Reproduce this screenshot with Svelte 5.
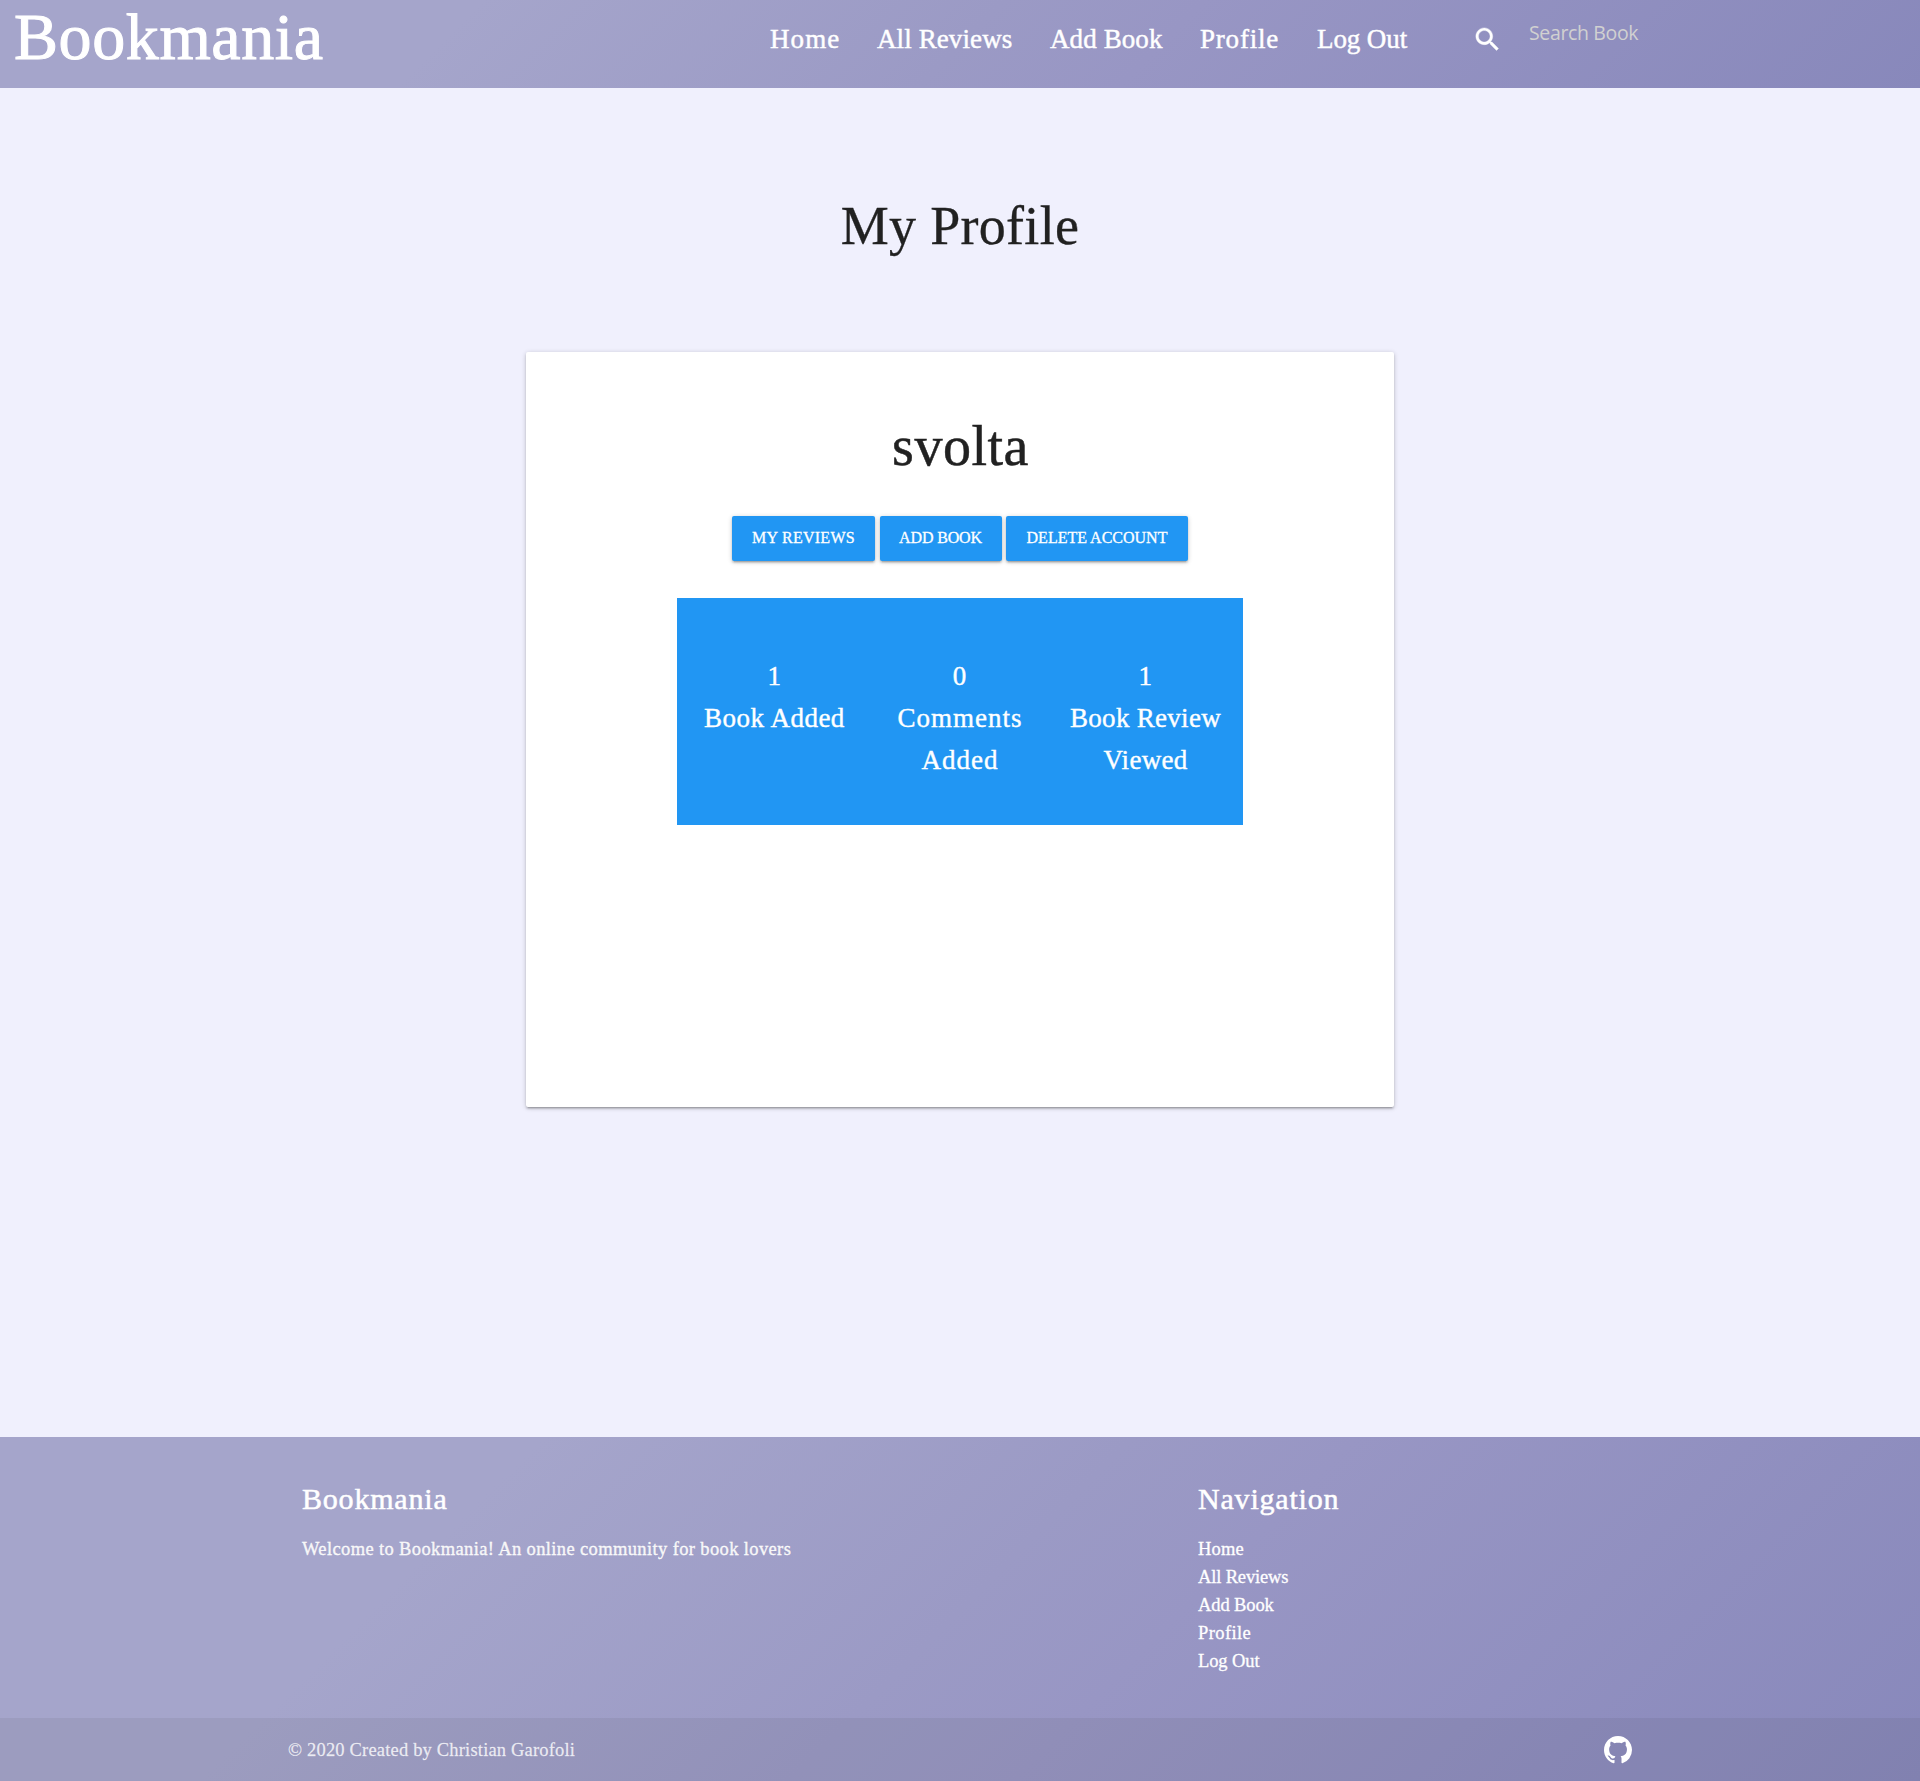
<script>
  const links = ['Home', 'All Reviews', 'Add Book', 'Profile', 'Log Out'];
  const actions = ['My Reviews', 'Add Book', 'Delete Account'];
  const stats = [
    { count: 1, label: 'Book Added' },
    { count: 0, label: 'Comments Added' },
    { count: 1, label: 'Book Review Viewed' },
  ];
</script>

<div class="page">
  <header>
    <a class="logo" href="#home">Bookmania</a>
    <nav>
      {#each links as link}
        <a href="#top">{link}</a>
      {/each}
    </nav>
    <form>
      <svg class="search" viewBox="0 0 24 24" aria-hidden="true">
        <path d="M15.5 14h-.79l-.28-.27C15.41 12.59 16 11.11 16 9.5 16 5.91 13.09 3 9.5 3S3 5.91 3 9.5 5.91 16 9.5 16c1.61 0 3.09-.59 4.23-1.57l.27.28v.79l5 4.99L20.49 19l-4.99-5zm-6 0C7.01 14 5 11.99 5 9.5S7.01 5 9.5 5 14 7.01 14 9.5 11.99 14 9.5 14z" />
      </svg>
      <span class="placeholder">Search Book</span>
    </form>
  </header>

  <main>
    <h1>My Profile</h1>
    <section class="card">
      <h2>svolta</h2>
      <div class="actions">
        {#each actions as action}
          <button type="button">{action}</button>
        {/each}
      </div>
      <div class="stats">
        {#each stats as stat}
          <div class="stat">
            <div>{stat.count}</div>
            <div>{stat.label}</div>
          </div>
        {/each}
      </div>
    </section>
  </main>

  <footer>
    <div class="columns">
      <div class="about">
        <h5>Bookmania</h5>
        <p>Welcome to Bookmania! An online community for book lovers</p>
      </div>
      <div>
        <h5>Navigation</h5>
        <ul>
          {#each links as link}
            <li><a href="#top">{link}</a></li>
          {/each}
        </ul>
      </div>
    </div>
    <div class="copyright">
      <span>© 2020 Created by Christian Garofoli</span>
      <svg class="github" viewBox="0 0 16 16" aria-hidden="true">
        <path d="M8 0C3.58 0 0 3.58 0 8c0 3.54 2.29 6.53 5.47 7.59.4.07.55-.17.55-.38 0-.19-.01-.82-.01-1.49-2.01.37-2.53-.49-2.69-.94-.09-.23-.48-.94-.82-1.13-.28-.15-.68-.52-.01-.53.63-.01 1.08.58 1.23.82.72 1.21 1.87.87 2.33.66.07-.52.28-.87.51-1.07-1.78-.2-3.64-.89-3.64-3.95 0-.87.31-1.59.82-2.15-.08-.2-.36-1.02.08-2.12 0 0 .67-.21 2.2.82.64-.18 1.32-.27 2-.27s1.36.09 2 .27c1.53-1.04 2.2-.82 2.2-.82.44 1.1.16 1.92.08 2.12.51.56.82 1.27.82 2.15 0 3.07-1.87 3.75-3.65 3.95.29.25.54.73.54 1.48 0 1.07-.01 1.93-.01 2.2 0 .21.15.46.55.38A8.01 8.01 0 0 0 16 8c0-4.42-3.58-8-8-8z" />
      </svg>
    </div>
  </footer>
</div>

<style>
  :global(body) {
    background: #f0f0fd;
  }
  .page {
    display: flex;
    flex-direction: column;
    height: 1781px;
    font-family: 'Liberation Serif', serif;
    color: #212121;
    font-variant-ligatures: none;
    -webkit-text-stroke: 0.3px currentColor;
  }
  .page * {
    box-sizing: border-box;
  }
  a {
    color: #fff;
    text-decoration: none;
  }
  h1, h2, h5, p, ul {
    margin: 0;
    padding: 0;
    font-weight: 400;
  }
  header, footer {
    background: linear-gradient(135deg, #a5a5cb 0%, #a5a5cb 24%, #9b9ac5 50%, #9896c4 60%, #8888bb 100%);
    color: #fff;
  }
  header {
    display: flex;
    height: 88px;
    flex: none;
  }
  .logo {
    width: 756px;
    padding-left: 14px;
    font-size: 66px;
    line-height: 74px;
    letter-spacing: 0.6px;
    -webkit-text-stroke-width: 1px;
  }
  nav {
    display: grid;
    grid-template-columns: 107px 173px 150px 117px 155px;
    font-size: 27px;
    line-height: 79px;
    width: 716px;
    padding-left: 14px;
    white-space: nowrap;
    -webkit-text-stroke-width: 0.45px;
  }
  nav a:nth-child(1) { letter-spacing: 1.1px; }
  nav a:nth-child(2) { letter-spacing: 0.1px; }
  nav a:nth-child(3) { letter-spacing: 0.1px; }
  nav a:nth-child(4) { letter-spacing: 0.8px; }
  nav a:nth-child(5) { letter-spacing: -0.1px; }
  form {
    display: flex;
    align-items: flex-start;
    gap: 26px;
  }
  svg {
    fill: currentColor;
    flex: none;
  }
  .search {
    width: 31px;
    height: 31px;
    margin-top: 24px;
    stroke: currentColor;
    stroke-width: 0.3px;
  }
  .placeholder {
    font-family: 'Open Sans', sans-serif;
    font-size: 19.5px;
    line-height: 66px;
    letter-spacing: -0.35px;
    color: #d1d1d1;
    -webkit-text-stroke-width: 0;
  }
  main {
    flex: 1;
    display: flex;
    flex-direction: column;
    align-items: center;
  }
  h1 {
    padding-top: 108px;
    font-size: 54px;
    line-height: 61px;
    letter-spacing: 0.3px;
    height: 264px;
  }
  .card {
    display: flex;
    flex-direction: column;
    align-items: center;
    width: 868px;
    height: 754.5px;
    padding-top: 64px;
    border-radius: 2px;
    background: #fff;
    box-shadow: 0 2px 2px 0 rgba(0, 0, 0, 0.14), 0 3px 1px -2px rgba(0, 0, 0, 0.12), 0 1px 5px 0 rgba(0, 0, 0, 0.2);
  }
  h2 {
    font-size: 56px;
    line-height: 60px;
    letter-spacing: 0.5px;
    padding-left: 1px;
    -webkit-text-stroke-width: 0.5px;
  }
  .actions {
    display: grid;
    grid-template-columns: 143px 122px 182px;
    column-gap: 4.5px;
    margin-top: 40px;
  }
  button {
    height: 45px;
    padding: 0 0 2px;
    border: 0;
    border-radius: 2px;
    background: #2196f3;
    color: #fff;
    font: 16px/43px 'Liberation Serif', serif;
    text-transform: uppercase;
    white-space: nowrap;
    -webkit-text-stroke: 0.3px #fff;
    box-shadow: 0 2px 2px 0 rgba(0, 0, 0, 0.14), 0 3px 1px -2px rgba(0, 0, 0, 0.12), 0 1px 5px 0 rgba(0, 0, 0, 0.2);
  }
  button:nth-child(1) { letter-spacing: 0.25px; }
  button:nth-child(2) { letter-spacing: -0.15px; }
  .stats {
    display: grid;
    grid-template-columns: repeat(3, 162px);
    column-gap: 23.5px;
    justify-content: center;
    width: 566px;
    height: 227px;
    margin-top: 37px;
    padding-top: 58px;
    background: #2196f3;
    color: #fff;
    font-size: 27px;
    line-height: 41.8px;
    letter-spacing: 0.5px;
    text-align: center;
    -webkit-text-stroke: 0.4px #fff;
  }
  .stat:nth-child(2) { letter-spacing: 1px; }
  .stat:nth-child(3) { letter-spacing: 0.3px; }
  footer {
    height: 344px;
    flex: none;
    display: flex;
    flex-direction: column;
    -webkit-text-stroke-color: #fff;
  }
  .columns {
    flex: 1;
    display: grid;
    grid-template-columns: 896px 1fr;
    padding: 45px 0 0 302px;
  }
  h5 {
    font-size: 30px;
    line-height: 33px;
    letter-spacing: 0.8px;
    margin-bottom: 20px;
    -webkit-text-stroke-width: 0.5px;
  }
  p, li {
    font-size: 18.5px;
    line-height: 28px;
  }
  p {
    color: #f5f5f5;
    letter-spacing: 0.37px;
  }
  ul {
    list-style: none;
  }
  li:nth-child(1) { letter-spacing: 0.2px; }
  li:nth-child(2) { letter-spacing: -0.15px; }
  li:nth-child(3) { letter-spacing: -0.1px; }
  li:nth-child(4) { letter-spacing: 0.4px; }
  li:nth-child(5) { letter-spacing: -0.1px; }
  .copyright {
    display: flex;
    justify-content: space-between;
    height: 63px;
    padding: 0 288px 0 288px;
    background: rgba(51, 51, 51, 0.08);
    color: rgba(255, 255, 255, 0.8);
    font-size: 18.5px;
    line-height: 64px;
    letter-spacing: 0.18px;
    -webkit-text-stroke: 0.3px rgba(255, 255, 255, 0.5);
  }
  .github {
    width: 28px;
    height: 28px;
    margin-top: 18px;
    color: #fff;
  }
</style>
